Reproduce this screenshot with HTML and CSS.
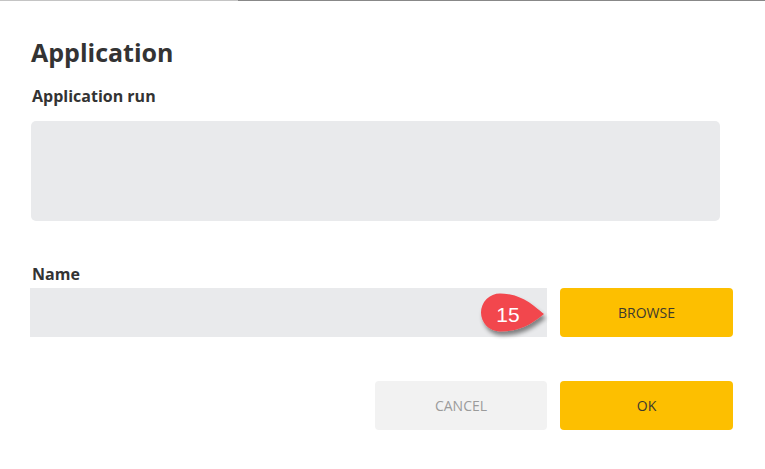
FILE: index.html
```html
<!DOCTYPE html>
<html>
<head>
<meta charset="utf-8">
<link rel="stylesheet" href="styles.css">
</head>
<body>
<div class="topline"></div>
<div class="dialog">
  <h1 class="title">Application</h1>
  <div class="label label-run">Application run</div>
  <div class="textarea"></div>
  <div class="label label-name">Name</div>
  <div class="name-row">
    <div class="input"></div>
    <button class="btn btn-primary">BROWSE</button>
    <svg class="badge" width="76" height="60" viewBox="0 0 76 60">
      <defs>
        <filter id="sh" x="-20%" y="-20%" width="150%" height="160%">
          <feDropShadow dx="2" dy="4" stdDeviation="2.2" flood-color="#000" flood-opacity="0.45"/>
        </filter>
      </defs>
      <path d="M68 26 C58 18 46 5.5 24 5.5 A19 19 0 0 0 24 43.5 C46 43.5 58 34 68 26 Z" fill="#f2474d" filter="url(#sh)"/>
      <text x="32" y="34" text-anchor="middle" class="badge-text">15</text>
    </svg>
  </div>
  <div class="actions">
    <button class="btn btn-cancel">CANCEL</button>
    <button class="btn btn-primary">OK</button>
  </div>
</div>
</body>
</html>
```

FILE: styles.css
```css
html, body {
  margin: 0;
  padding: 0;
  background: #ffffff;
}
body {
  font-family: "Open Sans", "Noto Sans", sans-serif;
  color: #333333;
  width: 765px;
  height: 469px;
  overflow: hidden;
}
.topline {
  height: 1px;
  background: linear-gradient(to right, #c4c4c4 0, #c4c4c4 238px, #888888 238px, #888888 100%);
}
.dialog {
  padding: 0 32px 0 30px;
  display: flex;
  flex-direction: column;
}
.title {
  margin: 34px 0 0 1px;
  font-size: 25px;
  line-height: 34px;
  font-weight: 700;
  color: #333333;
}
.label {
  font-size: 16px;
  line-height: 22px;
  font-weight: 700;
  color: #333333;
  margin-left: 2px;
}
.label-run {
  margin-top: 16px;
}
.textarea {
  margin: 14px 0 0 1px;
  width: 689px;
  height: 100px;
  background: #e9eaec;
  border-radius: 5px;
}
.label-name {
  margin-top: 42px;
}
.name-row {
  position: relative;
  margin-top: 3px;
  display: flex;
  gap: 13px;
}
.input {
  width: 517px;
  height: 49px;
  background: #e9eaec;
}
.btn {
  width: 173px;
  height: 49px;
  border: none;
  border-radius: 4px;
  font-family: "Open Sans", "Noto Sans", sans-serif;
  font-size: 14px;
  padding: 0;
  text-align: center;
}
.btn-primary {
  background: #fdbf00;
  color: #3d3a2e;
}
.btn-cancel {
  width: 172px;
  background: #f2f2f2;
  color: #9b9b9b;
}
.actions {
  margin-top: 44px;
  display: flex;
  justify-content: flex-end;
  gap: 13px;
}
.badge {
  position: absolute;
  left: 446px;
  top: 0;
  overflow: visible;
}
.badge-text {
  font-family: "Liberation Sans", Arial, sans-serif;
  font-size: 21px;
  fill: #ffffff;
}
```
